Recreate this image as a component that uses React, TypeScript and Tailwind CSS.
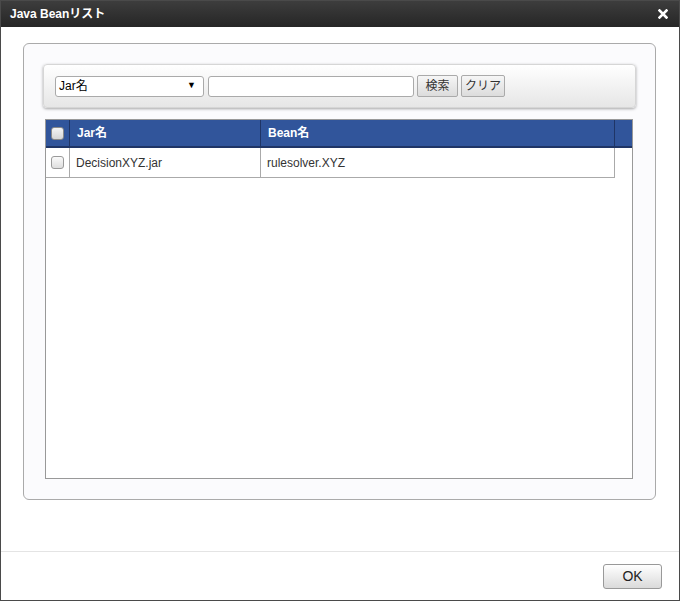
const font = { fontFamily: '"Liberation Sans", Arial, "Noto Sans CJK JP", sans-serif' };

const Check = ({ header }: { header?: boolean }) => (
  <span
    className={
      'block w-[13px] h-[13px] rounded-[3px] border ' +
      (header ? 'border-[#8a8a8a] bg-gradient-to-b from-[#f4f4f4] to-[#d6d6d6]' : 'border-[#9a9a9a] bg-gradient-to-b from-[#fafafa] to-[#dedede]')
    }
  />
);

const App = () => {
  const rows = [{ jar: 'DecisionXYZ.jar', bean: 'rulesolver.XYZ' }];

  return (
    <div style={font} className="w-[680px] h-[601px] border border-[#4a4a4a] bg-white flex flex-col text-[12px] text-[#333]">
      {/* title */}
      <div className="h-[26px] shrink-0 flex items-center justify-between pl-[9px] pr-[11px] bg-gradient-to-b from-[#3d3d3d] to-[#262626]">
        <span className="text-white font-bold text-[12px]">Java Beanリスト</span>
        <svg width="10" height="10" viewBox="0 0 10 10">
          <path d="M1.5 1.5 L8.5 8.5 M8.5 1.5 L1.5 8.5" stroke="white" strokeWidth="2.6" strokeLinecap="square" />
        </svg>
      </div>

      {/* body */}
      <div className="flex-1 pl-[22px] pr-[23px] pt-[16px]">
        <div className="h-[457px] border border-[#aaa] rounded-[6px] bg-[#fbfbfd] pt-[20px] px-[19px] pb-[20px] flex flex-col">
          {/* search */}
          <div className="h-[44px] shrink-0 rounded-[4px] border border-[#d6d6d6] bg-gradient-to-b from-white to-[#e6e6e6] shadow-[0_1px_3px_rgba(0,0,0,0.35)] flex items-center pl-[11px] gap-[3px]">
            <div className="w-[149px] h-[21px] border border-[#aaa] rounded-[3px] bg-white flex items-center justify-between pl-[3px] pr-[7px] text-black">
              <span>Jar名</span>
              <span className="text-[9px]">▼</span>
            </div>
            <div className="w-[206px] h-[21px] border border-[#aaa] rounded-[3px] bg-white ml-[1px]" />
            <button className="w-[41px] h-[22px] border border-[#aaa] rounded-[2px] bg-gradient-to-b from-[#f6f6f6] to-[#dcdcdc] text-[#333]">検索</button>
            <button className="w-[44px] h-[22px] border border-[#aaa] rounded-[2px] bg-gradient-to-b from-[#f6f6f6] to-[#dcdcdc] text-[#333]">クリア</button>
          </div>

          {/* table */}
          <div className="mt-[11px] ml-[2px] mr-[3px] flex-1 border border-[#999] bg-white flex flex-col">
            <div className="h-[28px] shrink-0 flex bg-[#31559b] border-b-2 border-[#1f3566] text-white font-bold">
              <div className="w-[24px] flex items-center justify-center border-r border-[#1f3566]">
                <Check header />
              </div>
              <div className="w-[191px] flex items-center pl-[7px] border-r border-[#1f3566]">Jar名</div>
              <div className="w-[354px] flex items-center pl-[7px] border-r border-[#1f3566]">Bean名</div>
              <div className="flex-1" />
            </div>
            {rows.map((r) => (
              <div key={r.jar} className="h-[30px] w-[569px] flex border-b border-r border-[#aaa]">
                <div className="w-[24px] flex items-center justify-center border-r border-[#aaa]">
                  <Check />
                </div>
                <div className="w-[191px] flex items-center pl-[6px] border-r border-[#aaa] text-[#333]">{r.jar}</div>
                <div className="flex-1 flex items-center pl-[6px] text-[#333]">{r.bean}</div>
              </div>
            ))}
          </div>
        </div>
      </div>

      {/* footer */}
      <div className="h-[49px] shrink-0 border-t border-[#e4e4e4] flex items-center justify-end pr-[17px] pt-[1px]">
        <button className="w-[59px] h-[25px] border border-[#999] rounded-[3px] bg-gradient-to-b from-white to-[#dadada] text-[14px] text-[#222]">OK</button>
      </div>
    </div>
  );
};

export default App;
